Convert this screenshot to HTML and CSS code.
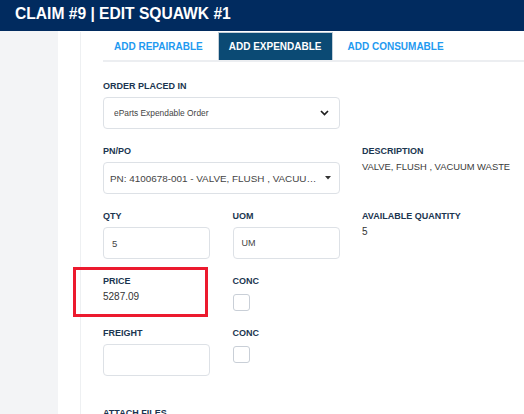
FILE: index.html
```html
<!DOCTYPE html>
<html lang="en">
<head>
<meta charset="utf-8">
<title>Claim #9 | Edit Squawk #1</title>
<link rel="stylesheet" href="styles.css">
</head>
<body>
<header class="topbar">
  <h1 class="topbar-title">CLAIM #9 | EDIT SQUAWK #1</h1>
</header>
<div class="layout">
  <aside class="sidebar"></aside>
  <main class="content">
    <section class="card">
      <nav class="tabs">
        <a class="tab">ADD REPAIRABLE</a>
        <a class="tab tab-active">ADD EXPENDABLE</a>
        <a class="tab">ADD CONSUMABLE</a>
      </nav>
      <form class="form">
        <div class="field span-2">
          <label class="field-label">ORDER PLACED IN</label>
          <div class="control select">
            <span class="select-text select-text-small">eParts Expendable Order</span>
            <svg class="chevron" width="9" height="6" viewBox="0 0 9 6"><polyline points="1,1 4.5,4.5 8,1" fill="none" stroke="#1e1e1e" stroke-width="1.7"/></svg>
          </div>
        </div>

        <div class="field span-2">
          <label class="field-label">PN/PO</label>
          <div class="control select select-pn">
            <span class="select-text">PN: 4100678-001 - VALVE, FLUSH , VACUUM WASTE</span>
            <svg class="caret" width="6" height="4" viewBox="0 0 6 4"><polygon points="0,0 6,0 3,3.5" fill="#333"/></svg>
          </div>
        </div>
        <div class="field">
          <label class="field-label">DESCRIPTION</label>
          <div class="field-value value-desc">VALVE, FLUSH , VACUUM WASTE</div>
        </div>

        <div class="field">
          <label class="field-label">QTY</label>
          <div class="control input"><span class="input-text">5</span></div>
        </div>
        <div class="field">
          <label class="field-label">UOM</label>
          <div class="control input"><span class="input-text input-text-small">UM</span></div>
        </div>
        <div class="field">
          <label class="field-label">AVAILABLE QUANTITY</label>
          <div class="field-value">5</div>
        </div>

        <div class="field field-price">
          <label class="field-label">PRICE</label>
          <div class="field-value">5287.09</div>
          <div class="highlight"></div>
        </div>
        <div class="field row-end">
          <label class="field-label">CONC</label>
          <div class="checkbox"></div>
        </div>

        <div class="field">
          <label class="field-label">FREIGHT</label>
          <div class="control input"></div>
        </div>
        <div class="field row-end">
          <label class="field-label">CONC</label>
          <div class="checkbox"></div>
        </div>

        <div class="field field-attach">
          <label class="field-label">ATTACH FILES</label>
        </div>
      </form>
    </section>
  </main>
</div>
</body>
</html>
```
FILE: styles.css
```css
* { box-sizing: border-box; }

html, body {
  margin: 0;
  padding: 0;
  height: 100%;
  overflow: hidden;
  background: #ffffff;
  font-family: "Liberation Sans", Arial, sans-serif;
}

.topbar {
  height: 31px;
  background: #012b5f;
  padding: 0 0 4px 15px;
}

.topbar-title {
  margin: 0;
  font-size: 15.6px;
  line-height: 27px;
  font-weight: bold;
  color: #ffffff;
}

.layout {
  display: flex;
  height: calc(100% - 31px);
}

.sidebar {
  width: 58px;
  flex: none;
  background: #f3f4f6;
}

.content {
  flex: 1;
  padding: 1px 0 0 22px;
  display: flex;
}

.card {
  flex: 1;
  border-left: 1px solid #eef0f2;
  padding-left: 22px;
}

.tabs {
  display: flex;
  gap: 4px;
  height: 30px;
  border-bottom: 2px solid #eceef1;
}

.tab {
  height: 28px;
  padding: 0 11px;
  display: flex;
  align-items: center;
  font-size: 10px;
  font-weight: bold;
  color: #1f9af0;
  white-space: nowrap;
}

.tab-active {
  background: #0b4a74;
  color: #ffffff;
  border: 1px solid #c3cfd9;
  border-bottom: none;
  padding: 0 10px;
}

.form {
  display: grid;
  grid-template-columns: 107px 107px 1fr;
  column-gap: 22.5px;
  row-gap: 17px;
  padding-top: 19px;
  align-items: start;
}

.field {
  display: flex;
  flex-direction: column;
  position: relative;
}

.span-2 { grid-column: span 2; }

.row-end { grid-column: 2 / 4; }

.field-label {
  font-size: 9px;
  line-height: 11px;
  font-weight: bold;
  color: #1b3550;
  margin-bottom: 5px;
  white-space: nowrap;
}

.field-value {
  font-size: 10px;
  line-height: 11px;
  color: #333333;
  margin-top: -1px;
  white-space: nowrap;
}

.value-desc {
  font-size: 9.4px;
  color: #3a3a3a;
}

.control {
  height: 32px;
  border: 1px solid #dde1e6;
  border-radius: 4px;
  background: #ffffff;
  display: flex;
  align-items: center;
}

.select {
  padding: 0 10px;
  justify-content: space-between;
}

.select-pn {
  padding: 0 8px 0 6px;
}

.select-text {
  font-size: 9.9px;
  color: #444444;
  white-space: nowrap;
  overflow: hidden;
  text-overflow: ellipsis;
  min-width: 0;
  flex: 1;
  padding-right: 5px;
}

.select-text-small {
  font-size: 8.4px;
}

.chevron, .caret { flex: none; }

.input { padding-left: 8px; }

.input-text {
  font-size: 9.5px;
  color: #444444;
}

.input-text-small { font-size: 9px; }

.checkbox {
  width: 17px;
  height: 17px;
  margin-top: 2px;
  border: 1px solid #c9cfd7;
  border-radius: 3px;
  background: #ffffff;
}

.field-attach { margin-top: 15px; }

.highlight {
  position: absolute;
  left: -30px;
  top: -9px;
  width: 134.5px;
  height: 50px;
  border: 3px solid #ec1a2e;
  pointer-events: none;
}
```
